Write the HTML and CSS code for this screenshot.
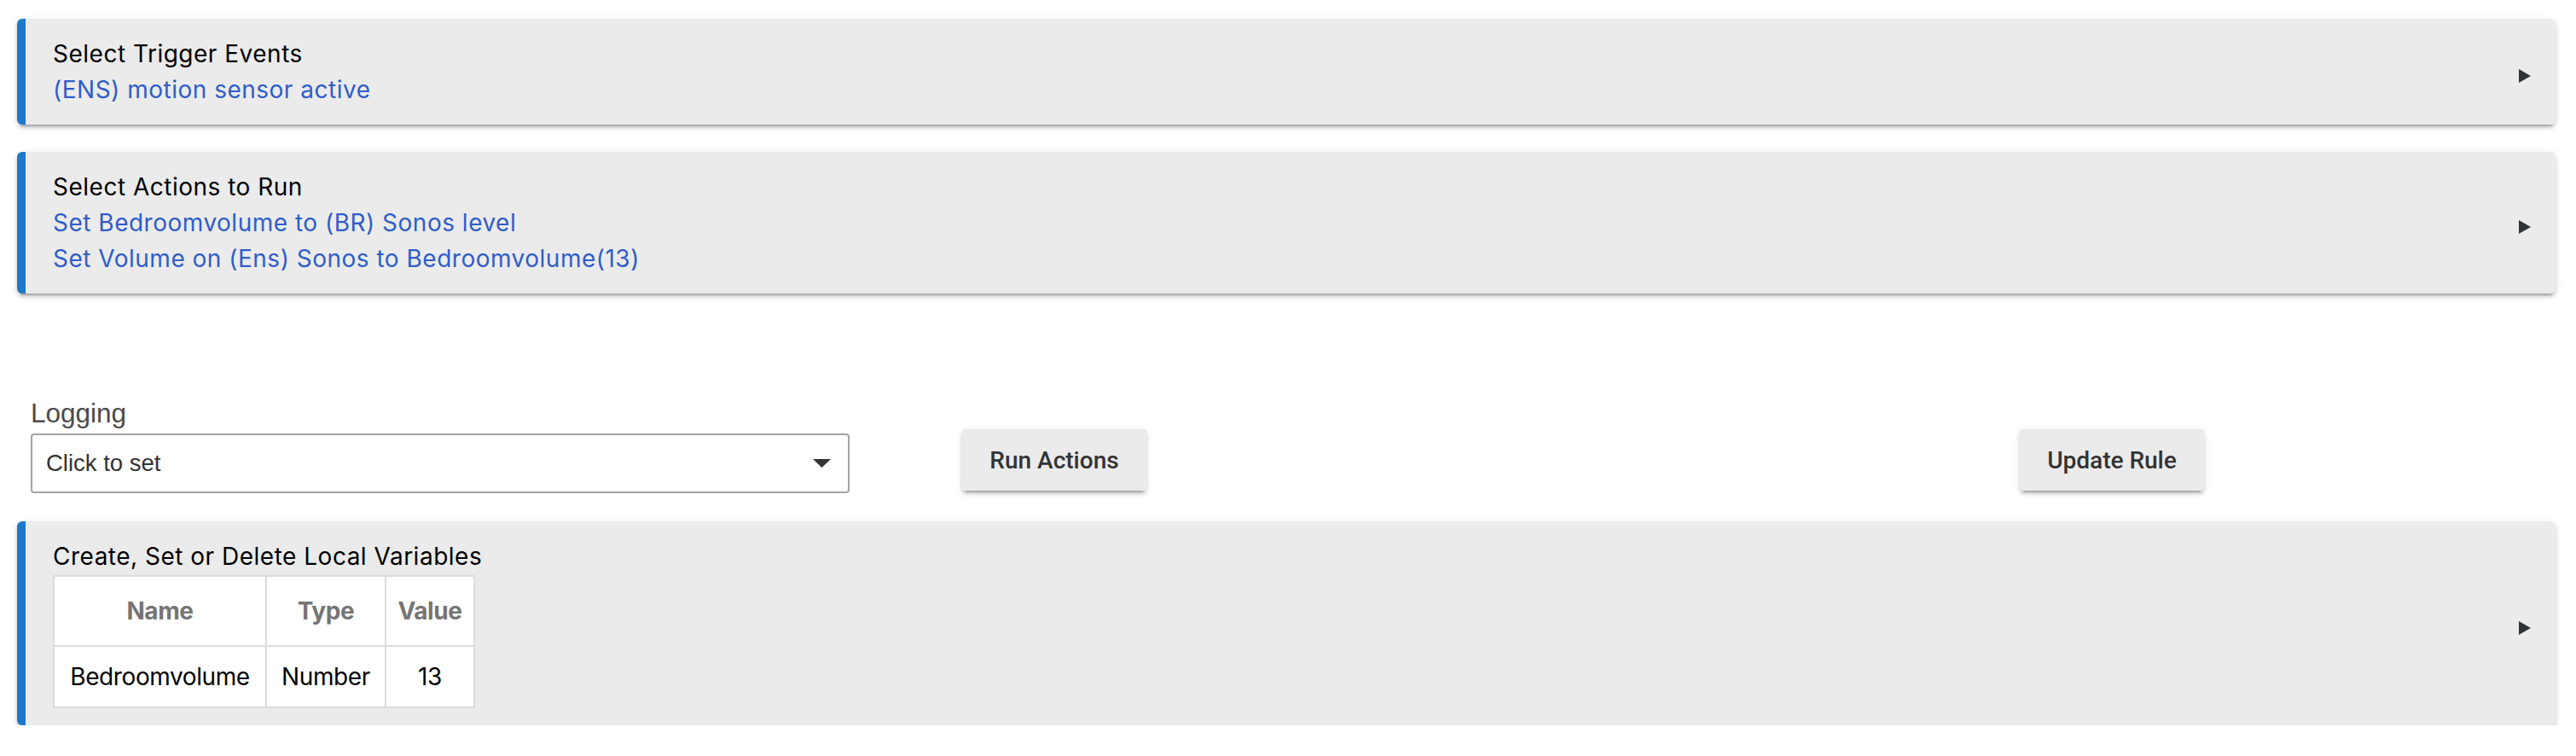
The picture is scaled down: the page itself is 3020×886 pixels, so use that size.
FILE: index.html
```html
<!DOCTYPE html>
<html>
<head>
<meta charset="utf-8">
<link rel="stylesheet" href="styles.css">
</head>
<body>
<div class="page">
  <section class="panel">
    <div class="panel-body">
      <div class="title">Select Trigger Events</div>
      <div class="link">(ENS) motion sensor active</div>
    </div>
    <svg class="chev" width="14" height="16" viewBox="0 0 14 16"><polygon points="0,0 14,8 0,16" fill="#2f3338"/></svg>
  </section>

  <section class="panel gap-top">
    <div class="panel-body">
      <div class="title">Select Actions to Run</div>
      <div class="link">Set Bedroomvolume to (BR) Sonos level</div>
      <div class="link">Set Volume on (Ens) Sonos to Bedroomvolume(13)</div>
    </div>
    <svg class="chev" width="14" height="16" viewBox="0 0 14 16"><polygon points="0,0 14,8 0,16" fill="#2f3338"/></svg>
  </section>

  <div class="controls">
    <div class="field">
      <label class="field-label">Logging</label>
      <div class="select">
        <span>Click to set</span>
        <svg width="21" height="10" viewBox="0 0 21 10"><polygon points="0,0 21,0 10.5,10" fill="#333"/></svg>
      </div>
    </div>
    <div class="cell"><button class="btn">Run Actions</button></div>
    <div class="cell"><button class="btn">Update Rule</button></div>
  </div>

  <section class="panel">
    <div class="panel-body">
      <div class="title">Create, Set or Delete Local Variables</div>
      <table class="vars">
        <thead>
          <tr><th class="c-name">Name</th><th class="c-type">Type</th><th class="c-val">Value</th></tr>
        </thead>
        <tbody>
          <tr><td>Bedroomvolume</td><td>Number</td><td>13</td></tr>
        </tbody>
      </table>
    </div>
    <svg class="chev" width="14" height="16" viewBox="0 0 14 16"><polygon points="0,0 14,8 0,16" fill="#2f3338"/></svg>
  </section>
</div>
</body>
</html>
```

FILE: styles.css
```css
html, body {
  margin: 0;
  padding: 0;
  background: #ffffff;
}

.page {
  padding: 22px 24px 0 20px;
  font-family: Inter, "Noto Sans", sans-serif;
}

.panel {
  display: flex;
  align-items: center;
  justify-content: space-between;
  background: #ebebeb;
  border-left: 10px solid #1f78c8;
  border-radius: 6px;
  padding: 20px 29px 20px 32px;
  box-shadow: 0 4px 4px 0 rgba(0,0,0,0.14), 0 6px 2px -4px rgba(0,0,0,0.2), 0 2px 10px 0 rgba(0,0,0,0.10);
}

.gap-top {
  margin-top: 32px;
}

.panel-body {
  font-size: 28px;
  line-height: 42px;
  letter-spacing: -0.4px;
}

.title,
.link {
  letter-spacing: 0.5px;
}

.title {
  color: #000;
}

.link {
  color: #2f5dc8;
}

.chev {
  flex: none;
  margin-top: 10px;
}

.controls {
  display: grid;
  grid-template-columns: 1092px 1240px 216px;
  align-items: end;
  padding: 122px 0 0 16px;
  margin-bottom: 33px;
}

.field {
  display: flex;
  flex-direction: column;
}

.field-label {
  font-family: "Liberation Sans", Arial, sans-serif;
  font-size: 31.5px;
  line-height: 36px;
  color: #4a4a4a;
  margin-bottom: 6px;
}

.select {
  width: 960px;
  height: 70px;
  box-sizing: border-box;
  border: 2px solid #a3a3a3;
  border-radius: 4px;
  display: flex;
  align-items: center;
  justify-content: space-between;
  padding: 0 20px 0 16px;
  font-family: "Liberation Sans", Arial, sans-serif;
  font-size: 27.5px;
  color: #333;
}

.cell {
  padding-bottom: 3px;
}

.btn {
  width: 216px;
  height: 72px;
  border: none;
  border-radius: 4px;
  background: #ebebeb;
  color: #333;
  font-family: Roboto, sans-serif;
  font-weight: 500;
  font-size: 28px;
  padding: 0;
  box-shadow: 0 4px 4px 0 rgba(0,0,0,0.14), 0 6px 2px -4px rgba(0,0,0,0.2), 0 2px 10px 0 rgba(0,0,0,0.10);
}

.vars {
  border-collapse: collapse;
  background: #fff;
  margin-top: 1px;
}

.vars th, .vars td {
  border: 2px solid #dcdcdc;
  text-align: center;
  padding: 0;
}

.vars th {
  height: 80px;
  font-weight: 700;
  color: #757575;
}

.vars td {
  height: 70px;
  color: #000;
}

.c-name { width: 247px; }
.c-type { width: 138px; }
.c-val { width: 102px; }
```
